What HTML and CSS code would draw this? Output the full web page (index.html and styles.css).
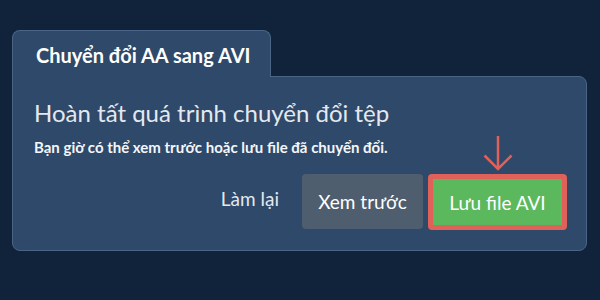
FILE: index.html
```html
<!DOCTYPE html>
<html lang="vi">

<head>
    <meta charset="UTF-8">
    <meta name="viewport" content="width=device-width, initial-scale=1.0">
    <title>Chuyển đổi AA sang AVI</title>
    <link rel="stylesheet" href="styles.css">
</head>

<body>
    <div class="wrap">
        <div class="tab">Chuyển đổi AA sang AVI</div>
        <div class="panel">
            <h2 class="title">Hoàn tất quá trình chuyển đổi tệp</h2>
            <p class="sub">Bạn giờ có thể xem trước hoặc lưu file đã chuyển đổi.</p>
            <div class="actions">
                <button class="btn redo">Làm lại</button>
                <button class="btn preview">Xem trước</button>
                <div class="save-box">
                    <svg class="arrow" width="30" height="36" viewBox="0 0 30 36">
                        <path d="M15 1 V34 M1.5 20.5 L15 34 L28.5 20.5" fill="none" stroke="#e0605a" stroke-width="2.5" />
                    </svg>
                    <button class="btn save">Lưu file AVI</button>
                </div>
            </div>
        </div>
    </div>
</body>

</html>
```

FILE: styles.css
```css
* {
    box-sizing: border-box;
}

body {
    margin: 0;
    padding: 0;
    height: 100vh;
    background-color: #11233a;
    font-family: Lato, "Liberation Sans", sans-serif;
    color: #e6eaf0;
}

.wrap {
    padding: 30px 13px 0 12px;
}

.tab {
    width: 259px;
    height: 47px;
    margin-bottom: -1px;
    padding: 2px 0 0 23px;
    background-color: #2e4969;
    border: 1px solid #4b6587;
    border-bottom: none;
    border-radius: 8px 8px 0 0;
    font-size: 20px;
    font-weight: bold;
    line-height: 44px;
    color: #ffffff;
    position: relative;
    z-index: 1;
}

.panel {
    height: 175px;
    background-color: #2e4969;
    border: 1px solid #4b6587;
    border-radius: 0 8px 8px 8px;
    padding: 20px 19px 0 21px;
}

.title {
    margin: 0;
    font-size: 24px;
    font-weight: normal;
    line-height: 32px;
    color: #e4e8ee;
}

.sub {
    margin: 8px 0 0;
    font-size: 15px;
    font-weight: bold;
    line-height: 20px;
    color: #f4f6f9;
}

.actions {
    display: flex;
    justify-content: flex-end;
    align-items: flex-end;
    margin-top: -22px;
}

.btn {
    font-family: Lato, "Liberation Sans", sans-serif;
    font-size: 19px;
    color: #ffffff;
    border: none;
    border-radius: 4px;
    height: 56px;
    cursor: pointer;
}

.redo {
    background: none;
    color: #e4e8ee;
    padding: 0 23px 7px 0;
}

.preview {
    width: 121px;
    height: 55px;
    background-color: #4e5e6f;
    margin-bottom: 1px;
    margin-right: 5px;
}

.save-box {
    display: flex;
    flex-direction: column;
    align-items: center;
}

.arrow {
    display: block;
    margin-bottom: 3px;
}

.save {
    width: 139px;
    background-color: #5cb85c;
    border: 5px solid #e0605a;
}
```
